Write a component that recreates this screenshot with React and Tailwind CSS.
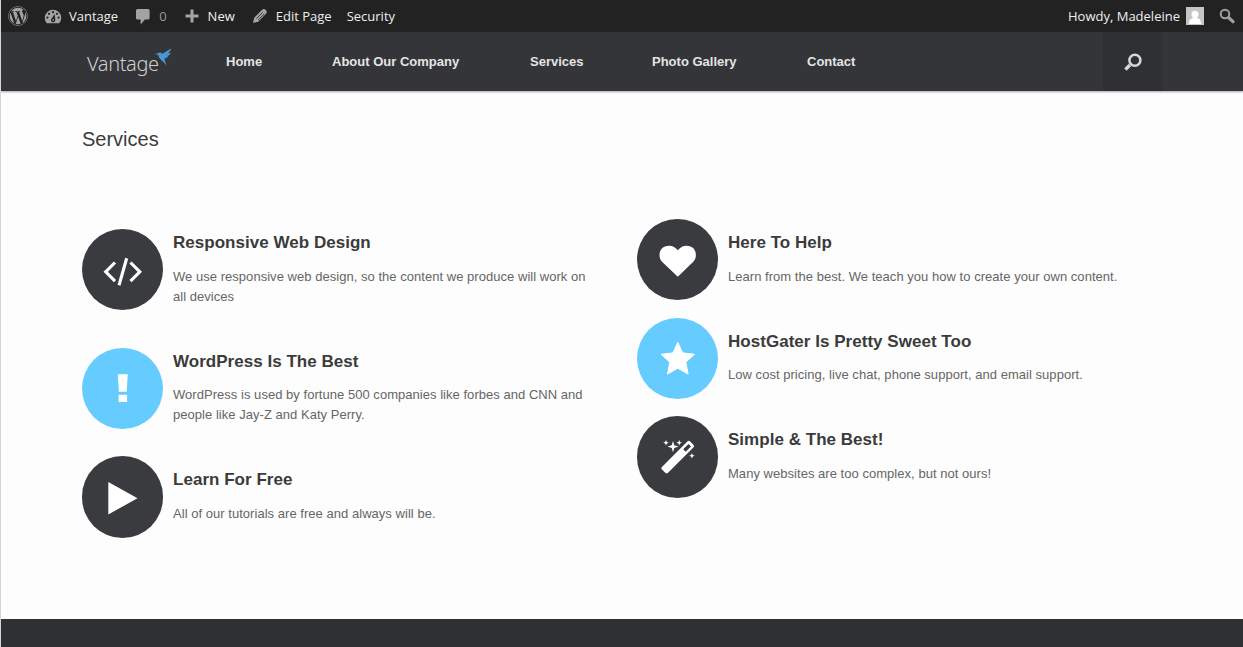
import { FaWordpress } from "react-icons/fa";

const barText = "text-[13px] leading-8 tracking-normal whitespace-nowrap";

function DashboardIcon() {
  return (
    <svg width="20" height="20" viewBox="0 0 20 20" className="text-[#a3a3a3]">
      <path fill="currentColor" d="M3.8 17.2h12.4A8.2 8.2 0 1 0 3.8 17.2z" />
      <g fill="#222222">
        <circle cx="10" cy="6.2" r="1.1" />
        <circle cx="6" cy="7.8" r="1.1" />
        <circle cx="14" cy="7.8" r="1.1" />
        <circle cx="4.4" cy="11.6" r="1.1" />
        <circle cx="15.6" cy="11.6" r="1.1" />
        <path d="M11.6 8l.7 5.6a2.2 2.2 0 1 1-3.6-1.2z" />
      </g>
      <circle cx="10.2" cy="13.9" r="0.8" fill="currentColor" />
    </svg>
  );
}

function CommentIcon() {
  return (
    <svg width="16" height="17" viewBox="0 0 16 17" fill="#a3a3a3">
      <path d="M2.5 1h10.6a1.5 1.5 0 0 1 1.5 1.500v7.600a1.500 1.500 0 0 1-1.500 1.500H10L5.600 16.400v-4.800H2.500A1.500 1.500 0 0 1 1 10.100V2.500A1.500 1.500 0 0 1 2.500 1z" />
    </svg>
  );
}

function PlusIcon() {
  return (
    <svg width="14" height="14" viewBox="0 0 14 14" fill="#a3a3a3">
      <path d="M5.500.500h3v5h5v3h-5v5h-3v-5h-5v-3h5z" />
    </svg>
  );
}

function PencilIcon() {
  return (
    <svg width="16" height="16" viewBox="0 0 16 16" fill="none">
      <path d="M1 15l1.200-5.200L9.800 2q2.200-1.800 4 0t0 4L6.200 13.800z" fill="#a3a3a3" />
      <path d="M4.500 10.600L10.600 4.400M6.200 12L12.300 5.800" stroke="#222" strokeWidth=".8" />
    </svg>
  );
}

function AdminSearchIcon() {
  return (
    <svg width="16" height="16" viewBox="0 0 16 16" fill="none" stroke="#a0a0a0" strokeLinecap="round">
      <circle cx="6" cy="6" r="4.300" strokeWidth="2" />
      <path d="M10 10l4 3.700" strokeWidth="3.200" />
    </svg>
  );
}

function Avatar() {
  return (
    <svg width="18" height="18" viewBox="0 0 18 18">
      <path fill="#c5c5c5" d="M0 0h18v18H0z" />
      <path fill="#fff" d="M9 3.700a3.500 3.500 0 0 1 3.500 3.600c0 1.600-.7 2.700-1.600 3.400 2.400.5 4.100 2.400 4.300 6.300H2.800c.2-3.900 1.900-5.800 4.300-6.300-.9-.7-1.600-1.800-1.600-3.400A3.500 3.500 0 0 1 9 3.700z" />
    </svg>
  );
}

function Bird() {
  return (
    <svg width="18" height="19" viewBox="0 0 18 19" fill="#4a96d8">
      <path d="M.5 6l3.300-.6c.9-1.100 2.100-1.200 3.200-.5l1.300.8L17.200.5c-.6 2.200-1.700 3.500-3.200 4.600l2.800.1c-.9 1.700-2.300 2.500-4 2.800l1.600.4c-1.100 1.200-2.300 1.600-3.700 1.600l.1 2.500 1.800 5.200-3.400-4C6.800 12 4.700 9.800 4.300 7z" />
    </svg>
  );
}

const icons = {
  code: (
    <g fill="none" stroke="#fff" strokeWidth="3.100">
      <path d="M33 33.500l-9.300 9.300 9.300 9.300M48.500 33.500l9.300 9.300-9.300 9.300M44.700 29.300L37 56.200" />
    </g>
  ),
  bang: <path fill="#fff" d="M35.800 26.200h10l-1.100 17.600h-7.800zM36.600 46.700h8.500v7.400h-8.500z" />,
  play: <path fill="#fff" d="M26.300 26v32.500L55.500 42.200z" />,
  heart: (
    <path
      fill="#fff"
      d="M40.800 57.800L25 42.700c-1.700-1.900-2.500-4-2.500-6.500 0-5.800 3.700-9.400 9.600-9.400 3.700 0 6.500 1.900 8.700 4.500 2.200-2.600 5-4.500 8.700-4.500 5.800 0 9.400 3.600 9.400 9.400 0 2.500-.9 4.700-2.600 6.500z"
    />
  ),
  star: (
    <path
      fill="#fff"
      stroke="#fff"
      strokeWidth="1"
      strokeLinejoin="round"
      d="M40.800 24.400l4.900 10.500 11.800 1.400-8.700 7.900 2.300 11.900-10.300-5.900-10.300 5.900 2.300-11.900-8.700-7.900 11.800-1.400z"
    />
  ),
  wand: (
    <g fill="#fff">
      <path
        fillRule="evenodd"
        d="M24.700 51.200L50.600 25.300q1.200-1 2.400 0l3.600 3.600q1 1.200 0 2.400L30.800 57.100q-1.200.8-2.300-.1l-3.800-3.700q-.9-1 0-2.100zM46.200 33.200l2.500 2.500 5.300-5.300-2.500-2.500z"
      />
      <path d="M36 25l1.300 4.300 4.300 1.300-4.300 1.300L36 36.200l-1.300-4.300-4.300-1.300 4.300-1.300zM29 23.900l.8 2 2 .8-2 .8-.8 2-.8-2-2-.8 2-.8zM42.200 23.900l.8 2 2 .8-2 .8-.8 2-.8-2-2-.8 2-.8zM54.900 36.900l.8 2 2 .8-2 .8-.8 2-.8-2-2-.8 2-.8z" />
    </g>
  ),
};

function Feature({ icon, blue, title, children, className, circle = "h-[81px]", gap }) {
  return (
    <article className={`flex gap-[10px] ${className}`}>
      <svg
        viewBox="0 0 81 81"
        preserveAspectRatio="xMidYMin meet"
        className={`w-[81px] shrink-0 rounded-full ${circle} ${blue ? "bg-[#66ccff]" : "bg-[#3a3b3e]"}`}
      >
        {icons[icon]}
      </svg>
      <div className="pt-[14px]">
        <h2 className="text-[17px] leading-5 font-bold tracking-[0.03px] text-[#3b3b3b] whitespace-nowrap">{title}</h2>
        <p className={`text-[13px] leading-5 tracking-[0.035px] text-[#666666] whitespace-nowrap ${gap}`}>{children}</p>
      </div>
    </article>
  );
}

export default function App() {
  return (
    <div className="h-[647px] w-[1243px] overflow-hidden border-l border-[#d4d4d4] bg-[#fdfdfd] flex flex-col font-['Liberation_Sans',Arial,sans-serif]">
      <header className="h-8 shrink-0 bg-[#222222] text-[#eeeeee] flex items-center font-['Open_Sans',sans-serif]">
        <FaWordpress size={20} className="ml-[7px] text-[#a3a3a3]" />
        <div className="ml-[15px] flex items-center gap-[6px]">
          <DashboardIcon />
          <span className={barText}>Vantage</span>
        </div>
        <div className="ml-[17px] flex items-center gap-[8px] text-[#999999]">
          <CommentIcon />
          <span className={barText}>0</span>
        </div>
        <div className="ml-[18px] flex items-center gap-[9px]">
          <PlusIcon />
          <span className={barText}>New</span>
        </div>
        <div className="ml-[17px] flex items-center gap-[8px]">
          <PencilIcon />
          <span className={barText}>Edit Page</span>
        </div>
        <span className={`ml-[15px] ${barText}`}>Security</span>
        <div className="ml-auto mr-[8px] flex items-center">
          <span className={barText}>Howdy, Madeleine</span>
          <span className="ml-[6px]"><Avatar /></span>
          <span className="ml-[15px]"><AdminSearchIcon /></span>
        </div>
      </header>

      <nav className="relative h-[59px] shrink-0 bg-[#343538] shadow-[0_1px_2px_rgba(0,0,0,0.35)] flex pl-[86px] text-[13px] font-bold leading-[59px] text-[#e4e4e4]">
        <div className="flex w-[139px] shrink-0">
          <span className="w-[67px] font-['Noto_Sans',sans-serif] text-[20px] font-light leading-[63px] tracking-[-0.4px] text-[#cfd0d2]">Vantage</span>
          <span className="mt-[16px]"><Bird /></span>
        </div>
        <a className="w-[106px] whitespace-nowrap">Home</a>
        <a className="w-[198px] whitespace-nowrap">About Our Company</a>
        <a className="w-[122px] whitespace-nowrap">Services</a>
        <a className="w-[155px] whitespace-nowrap">Photo Gallery</a>
        <a className="whitespace-nowrap">Contact</a>
        <div className="ml-auto mr-[81px] flex w-[59px] items-center justify-center bg-[#2f3033]">
          <svg width="18" height="18" viewBox="0 0 18 18" fill="none" stroke="#d8d8d8">
            <circle cx="10.900" cy="7.300" r="5.500" strokeWidth="2.500" />
            <path d="M6 12l-4.600 4.400" strokeWidth="3.400" />
          </svg>
        </div>
      </nav>

      <main className="flex-1 pl-[81px]">
        <h1 className="pt-[36px] text-[20px] leading-6 text-[#3b3b3b]">Services</h1>
        <div className="mt-[68px] grid grid-cols-[555px_1fr]">
          <section>
            <Feature icon="code" title="Responsive Web Design" className="h-[119px]" circle="mt-[10px] h-[81px]" gap="mt-[14px]">
              We use responsive web design, so the content we produce will work on<br />all devices
            </Feature>
            <Feature icon="bang" blue title="WordPress Is The Best" className="h-[118px]" circle="mt-[10px] h-[81px]" gap="mt-[13px]">
              WordPress is used by fortune 500 companies like forbes and CNN and<br />people like Jay-Z and Katy Perry.
            </Feature>
            <Feature icon="play" title="Learn For Free" className="h-[90px]" circle="h-[82px]" gap="mt-[14px]">
              All of our tutorials are free and always will be.
            </Feature>
          </section>
          <section>
            <Feature icon="heart" title="Here To Help" className="h-[99px]" gap="mt-[14px]">
              Learn from the best. We teach you how to create your own content.
            </Feature>
            <Feature icon="star" blue title="HostGater Is Pretty Sweet Too" className="h-[98px]" gap="mt-[13px]">
              Low cost pricing, live chat, phone support, and email support.
            </Feature>
            <Feature icon="wand" title="Simple & The Best!" className="h-[90px]" circle="h-[82px]" gap="mt-[14px]">
              Many websites are too complex, but not ours!
            </Feature>
          </section>
        </div>
      </main>
      <footer className="h-[28px] shrink-0 bg-[#2f3033]" />
    </div>
  );
}
